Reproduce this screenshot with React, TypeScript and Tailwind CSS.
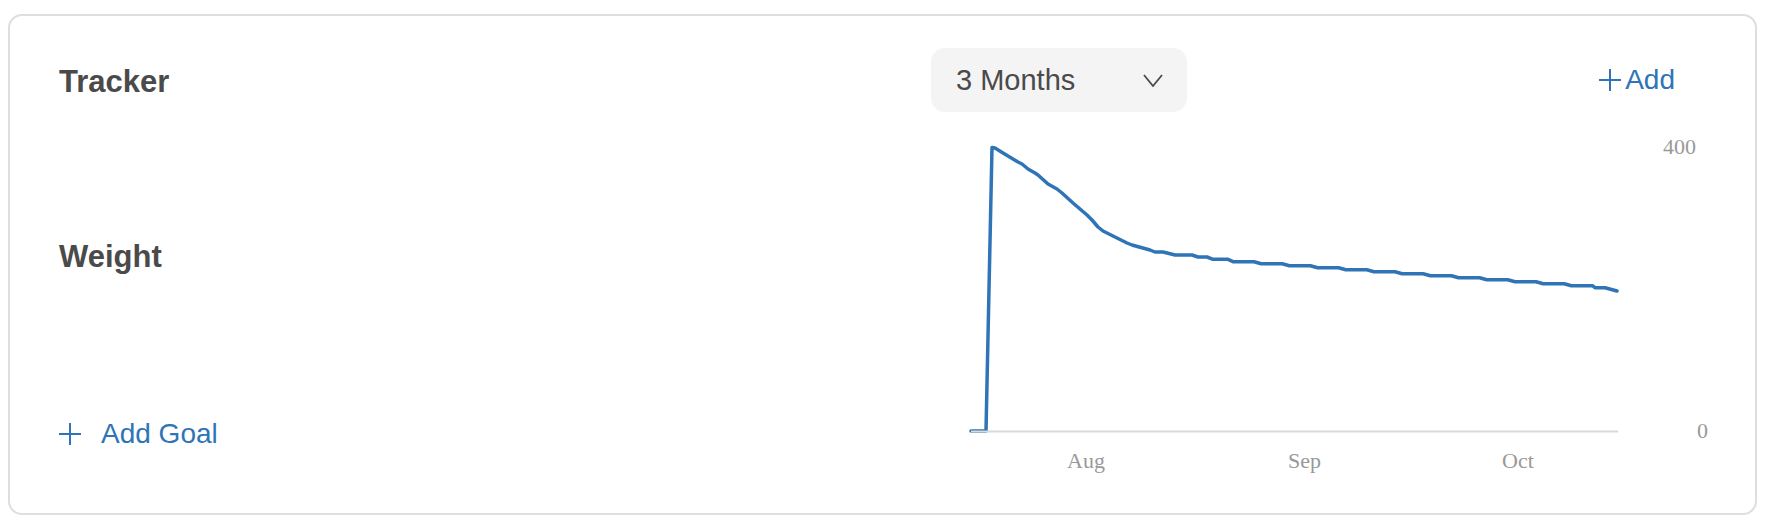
import React from "react";

const BLUE = "#2f74b6";

// weight readings, drawn in page pixels (viewBox uses the same coordinates)
const head: [number, number][] = [
  [971, 431], [986, 431], [992, 147.5], [995, 148], [1003, 153], [1018, 162],
  [1022, 164], [1028, 169], [1035, 173], [1038, 175], [1048, 184], [1057, 189],
  [1062, 193], [1073, 203], [1087, 215], [1092, 220], [1098, 227], [1103, 231],
  [1115, 237], [1127, 243], [1132, 245], [1150, 250], [1155, 252], [1163, 252],
  [1175, 255], [1192, 255], [1198, 257], [1207, 257], [1213, 259.3], [1228, 259.3],
];

const steps: [number, number][] = [];
for (let i = 0; i <= 12; i++) {
  const x = 1233 + 28.2 * i;
  const y = 261.7 + 2 * i;
  steps.push([x, y], [x + 21, y]);
}

const points = [...head, ...steps, [1595, 287.7], [1605, 287.7], [1617, 291]];
const linePath = points.map(([x, y], i) => `${i ? "L" : "M"}${x},${y}`).join(" ");

const PlusIcon = () => (
  <svg width="22" height="22" viewBox="0 0 22 22" fill="none" stroke={BLUE} strokeWidth="2">
    <path d="M11 0V22M0 11H22" />
  </svg>
);

const WeightChart = () => (
  <svg width="824" height="401" viewBox="931 112 824 401" className="block">
    <path d={linePath} fill="none" stroke={BLUE} strokeWidth="3.5" strokeLinejoin="round" strokeLinecap="round" />
    <line x1="971" y1="431.5" x2="1618" y2="431.5" stroke="#d9d9d9" strokeWidth="2" />
    <g fill="#999" fontFamily="'Liberation Serif', serif" fontSize="22">
      <text x="1663" y="154">400</text>
      <text x="1697" y="438">0</text>
      <text x="1067" y="468">Aug</text>
      <text x="1288" y="468">Sep</text>
      <text x="1502" y="468">Oct</text>
    </g>
  </svg>
);

const App = () => {
  return (
    <div className="min-h-screen bg-white pt-[14px] pl-[8px] pr-[9px] font-['Liberation_Sans',sans-serif]">
      <div className="flex h-[501px] w-[1749px] rounded-[14px] border-2 border-[#dedede] bg-white">
        {/* Left: titles */}
        <div className="flex w-[921px] flex-col pl-[49px] pt-[50px] text-[#4a4a4a]">
          <h2 className="text-[31px] leading-none font-bold">Tracker</h2>
          <h3 className="mt-[144px] text-[31px] leading-none font-bold">Weight</h3>
          <button className="mt-[148px] flex items-center gap-[20px] text-[28px] leading-none text-[#2f74b6]">
            <PlusIcon />
            <span>Add Goal</span>
          </button>
        </div>

        {/* Right: range, add, chart */}
        <div className="flex flex-1 flex-col pt-[32px]">
          <div className="flex h-[64px] items-center justify-between pr-[80px]">
            <div className="flex h-[64px] w-[256px] items-center justify-between rounded-[14px] bg-[#f4f4f4] pl-[25px] pr-[24px]">
              <span className="text-[29px] leading-none text-[#4a4a4a]">3 Months</span>
              <svg width="20" height="13" viewBox="0 0 20 13" fill="none" stroke="#4a4a4a" strokeWidth="1.8">
                <path d="M1 1L10 12L19 1" />
              </svg>
            </div>
            <button className="flex items-center gap-[4px] text-[28px] leading-none text-[#2f74b6]">
              <PlusIcon />
              <span>Add</span>
            </button>
          </div>
          <WeightChart />
        </div>
      </div>
    </div>
  );
};

export default App;
